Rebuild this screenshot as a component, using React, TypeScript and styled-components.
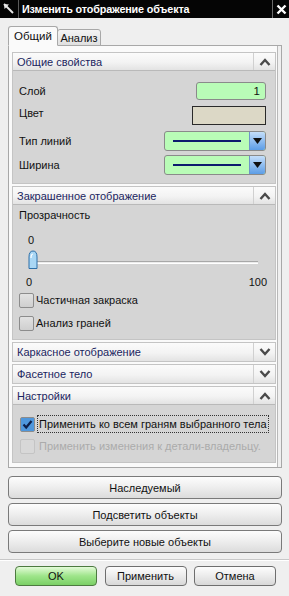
import React, { useState } from 'react'
import styled, { createGlobalStyle } from 'styled-components'

const GlobalStyle = createGlobalStyle`
  html, body {
    margin: 0;
    padding: 0;
    background: #efefef;
  }
  body {
    font-family: "Liberation Sans", Arial, sans-serif;
    font-size: 11px;
    color: #111;
  }
`

const Window = styled.div`
  width: 289px;
  height: 596px;
  background: #efefef;
  display: flex;
  flex-direction: column;
  overflow: hidden;
`

const TitleBar = styled.div`
  height: 18px;
  background: #050505;
  display: flex;
  align-items: stretch;
  color: #fff;
`

const TitleIcon = styled.div`
  width: 18px;
  display: flex;
  align-items: center;
  justify-content: center;
  border-right: 1px solid #5a5a5a;
`

const TitleText = styled.div`
  flex: 1;
  padding-left: 3px;
  font-weight: bold;
  font-size: 10.8px;
  line-height: 18px;
  letter-spacing: -0.15px;
`

const CloseBox = styled.div`
  width: 16px;
  border-left: 1px solid #6a6a6a;
  display: flex;
  align-items: center;
  justify-content: center;
`

const Body = styled.div`
  padding: 8px 7px 0 8px;
  display: flex;
  flex-direction: column;
`

const TabRow = styled.div`
  display: flex;
  align-items: flex-end;
  height: 20px;
  position: relative;
  z-index: 1;
`

const Tab = styled.div<{ $active?: boolean }>`
  height: ${p => (p.$active ? 20 : 17)}px;
  width: ${p => (p.$active ? 50 : 44)}px;
  box-sizing: border-box;
  border: 1px solid #a8a8a8;
  border-bottom: ${p => (p.$active ? '1px solid #fafafa' : '1px solid #a8a8a8')};
  border-radius: 3px 3px 0 0;
  background: ${p => (p.$active ? '#fafafa' : 'linear-gradient(#f4f4f4, #e0e0e0)')};
  display: flex;
  align-items: center;
  justify-content: center;
  font-size: ${p => (p.$active ? 11.5 : 11)}px;
  margin-right: ${p => (p.$active ? '-1px' : 0)};
  position: relative;
  z-index: ${p => (p.$active ? 2 : 1)};
`

const Panel = styled.div`
  margin-top: -1px;
  height: 423px;
  box-sizing: border-box;
  border: 1px solid #a8a8a8;
  box-shadow: inset -3px 0 0 #efefef, inset -4px 0 0 #b8b8b8;
  background: #fafafa;
  padding: 6px 5px 0 3px;
  display: flex;
  flex-direction: column;
  gap: 2px;
`

const Section = styled.div`
  border: 1px solid #c4c4c4;
  background: #d5d5d5;
`

const SectionHeader = styled.div<{ $open: boolean }>`
  height: 18px;
  box-sizing: border-box;
  display: flex;
  align-items: stretch;
  background: linear-gradient(#fbfbfb, #f3f3f3 55%, #e3e3e3);
  border-bottom: ${p => (p.$open ? '1px solid #b9b9b9' : 'none')};
`

const SectionTitle = styled.div`
  flex: 1;
  padding-left: 4px;
  line-height: 18px;
  color: #1b2560;
`

const Toggle = styled.div`
  width: 21px;
  border-left: 1px solid #d0d0d0;
  display: flex;
  align-items: center;
  justify-content: center;
`

const SectionBody = styled.div<{ $pad: string }>`
  padding: ${p => p.$pad};
  display: flex;
  flex-direction: column;
`

const FieldRow = styled.div<{ $h: number }>`
  height: ${p => p.$h}px;
  display: flex;
  align-items: center;
  justify-content: space-between;
`

const NumberBox = styled.div`
  width: 70px;
  height: 18px;
  box-sizing: border-box;
  border: 1px solid #8a8a8a;
  border-radius: 3px;
  background: #b9fcb7;
  text-align: right;
  padding-right: 5px;
  line-height: 16px;
  font-size: 11.5px;
`

const ColorBox = styled.div`
  width: 74px;
  height: 19px;
  box-sizing: border-box;
  border: 1px solid #2a2a2a;
  background: #dcd8c6;
`

const Combo = styled.div`
  width: 102px;
  height: 20px;
  box-sizing: border-box;
  border: 1px solid #8a8a8a;
  border-radius: 3px;
  background: #b9fcb7;
  display: flex;
  align-items: center;
  padding-left: 8px;
  overflow: hidden;
`

const ComboLine = styled.div`
  flex: 1;
  height: 2px;
  background: #0c1a6e;
  margin-right: 8px;
`

const ComboButton = styled.div`
  width: 15px;
  align-self: stretch;
  background: linear-gradient(#c4defa, #5c9de6);
  border-left: 1px solid #6f94c8;
  display: flex;
  align-items: center;
  justify-content: center;
`

const Label = styled.div<{ $lift?: number }>`
  line-height: 14px;
  margin-top: ${p => -(p.$lift || 0)}px;
`

const SliderArea = styled.div`
  padding: 0 0 0 8px;
  display: flex;
  flex-direction: column;
`

const SliderTrack = styled.div`
  height: 20px;
  margin-top: 2px;
  position: relative;
  display: flex;
  align-items: flex-start;
  padding-top: 12px;
  box-sizing: border-box;
`

const TrackLine = styled.div`
  flex: 1;
  height: 3px;
  margin: 0 9px 0 2px;
  box-sizing: border-box;
  border-top: 1px solid #a8a8a8;
  border-bottom: 1px solid #ffffff;
  background: #ececec;
`

const Thumb = styled.div`
  position: absolute;
  left: 1px;
  top: 1px;
`

const Scale = styled.div<{ $top: number; $shift?: number }>`
  display: flex;
  justify-content: space-between;
  margin-top: ${p => p.$top}px;
  margin-left: ${p => p.$shift || 0}px;
  line-height: 14px;
`

const CheckRow = styled.div<{ $disabled?: boolean; $top?: number }>`
  height: 22px;
  margin-top: ${p => p.$top || 0}px;
  display: flex;
  align-items: center;
  gap: 2px;
  color: ${p => (p.$disabled ? '#ababab' : '#111')};
`

const Box = styled.div<{ $disabled?: boolean }>`
  width: 13px;
  height: 13px;
  border: 1px solid ${p => (p.$disabled ? '#c4c4c4' : '#8c8c8c')};
  border-radius: 2px;
  background: ${p => (p.$disabled ? '#d8d8d8' : 'linear-gradient(#e2e2e2, #cfcfcf)')};
  display: flex;
  align-items: center;
  justify-content: center;
  flex-shrink: 0;
`

const FocusText = styled.span<{ $focus?: boolean }>`
  border: 1px dotted ${p => (p.$focus ? '#333' : 'transparent')};
  padding: 1px 1px;
  line-height: 14px;
  white-space: nowrap;
`

const Buttons = styled.div`
  display: flex;
  flex-direction: column;
  gap: 4px;
  margin-top: 8px;
`

const WideButton = styled.div`
  height: 23px;
  box-sizing: border-box;
  border: 1px solid #7a7a7a;
  border-radius: 4px;
  background: linear-gradient(#fdfdfd, #efefef 45%, #dcdcdc);
  display: flex;
  align-items: center;
  justify-content: center;
`

const Divider = styled.div`
  height: 1px;
  background: #c8c8c8;
  border-bottom: 1px solid #ffffff;
  margin: 6px -7px 0 -8px;
`

const Footer = styled.div`
  display: flex;
  justify-content: space-between;
  padding: 5px 6px 0 7px;
`

const FooterButton = styled.div<{ $primary?: boolean }>`
  width: 82px;
  height: 20px;
  box-sizing: border-box;
  border: 1px solid ${p => (p.$primary ? '#4d7a40' : '#6e6e6e')};
  border-radius: 4px;
  background: ${p =>
    p.$primary
      ? 'linear-gradient(#e4fbd8, #9ee58a 50%, #7bd066)'
      : 'linear-gradient(#fdfdfd, #ededed 45%, #d8d8d8)'};
  display: flex;
  align-items: center;
  justify-content: center;
`

const Chevron = ({ up }: { up: boolean }) => (
  <svg width="12" height="8" viewBox="0 0 12 8">
    <path
      d={up ? 'M1.5 7 L6 2 L10.5 7' : 'M1.5 1 L6 6 L10.5 1'}
      fill="none"
      stroke="#4a4a4a"
      strokeWidth="2.4"
    />
  </svg>
)

const DownArrow = () => (
  <svg width="9" height="6" viewBox="0 0 9 6">
    <path d="M0 0 H9 L4.5 6 Z" fill="#111" />
  </svg>
)

const Check = ({ on, disabled }: { on?: boolean; disabled?: boolean }) => (
  <Box $disabled={disabled}>
    {on && (
      <svg width="13" height="13" viewBox="0 0 13 13">
        <rect x="0" y="0" width="13" height="13" fill="#4f97dc" />
        <path d="M2.5 6.5 L5.2 9.5 L10.5 3" fill="none" stroke="#0d1f4a" strokeWidth="2.2" />
      </svg>
    )}
  </Box>
)

const Header = ({ title, open }: { title: string; open: boolean }) => (
  <SectionHeader $open={open}>
    <SectionTitle>{title}</SectionTitle>
    <Toggle>
      <Chevron up={open} />
    </Toggle>
  </SectionHeader>
)

const LineCombo = () => (
  <Combo>
    <ComboLine />
    <ComboButton>
      <DownArrow />
    </ComboButton>
  </Combo>
)

const App: React.FC = () => {
  const [tab] = useState(0)

  return (
    <>
      <GlobalStyle />
      <Window>
        <TitleBar>
          <TitleIcon>
            <svg width="12" height="12" viewBox="0 0 12 12">
              <path d="M1 1 L10 10" stroke="#e8e8e8" strokeWidth="2" />
              <path d="M1 1 L6 1.5 L1.5 6 Z" fill="#e8e8e8" />
            </svg>
          </TitleIcon>
          <TitleText>Изменить отображение объекта</TitleText>
          <CloseBox>
            <svg width="11" height="11" viewBox="0 0 11 11">
              <path d="M1.5 1.5 L9.5 9.5 M9.5 1.5 L1.5 9.5" stroke="#fff" strokeWidth="2.4" />
            </svg>
          </CloseBox>
        </TitleBar>

        <Body>
          <TabRow>
            <Tab $active={tab === 0}>Общий</Tab>
            <Tab $active={tab === 1}>Анализ</Tab>
          </TabRow>
          <Panel>
            <Section>
              <Header title="Общие свойства" open />
              <SectionBody $pad="10px 9px 6px 6px">
                <FieldRow $h={20}>
                  <Label>Слой</Label>
                  <NumberBox>1</NumberBox>
                </FieldRow>
                <FieldRow $h={28}>
                  <Label $lift={4}>Цвет</Label>
                  <ColorBox />
                </FieldRow>
                <FieldRow $h={24}>
                  <Label>Тип линий</Label>
                  <LineCombo />
                </FieldRow>
                <FieldRow $h={24}>
                  <Label>Ширина</Label>
                  <LineCombo />
                </FieldRow>
              </SectionBody>
            </Section>

            <Section>
              <Header title="Закрашенное отображение" open />
              <SectionBody $pad="3px 8px 5px 6px">
                <Label>Прозрачность</Label>
                <SliderArea>
                  <Scale $top={11} $shift={1}>
                    <span>0</span>
                  </Scale>
                  <SliderTrack>
                    <TrackLine />
                    <Thumb>
                      <svg width="10" height="20" viewBox="0 0 10 20">
                        <path
                          d="M1 18.5 V7 Q1 1 5 1 Q9 1 9 7 V18.5 Z"
                          fill="#a9d7f5"
                          stroke="#2d6fa8"
                          strokeWidth="1"
                        />
                        <path d="M3 8 Q3 4 5 4" stroke="#ffffff" fill="none" strokeWidth="1.2" />
                      </svg>
                    </Thumb>
                  </SliderTrack>
                  <Scale $top={6} $shift={-1}>
                    <span>0</span>
                    <span>100</span>
                  </Scale>
                </SliderArea>
                <CheckRow>
                  <Check />
                  <span>Частичная закраска</span>
                </CheckRow>
                <CheckRow $top={1}>
                  <Check />
                  <span>Анализ граней</span>
                </CheckRow>
              </SectionBody>
            </Section>

            <Section>
              <Header title="Каркасное отображение" open={false} />
            </Section>
            <Section>
              <Header title="Фасетное тело" open={false} />
            </Section>

            <Section>
              <Header title="Настройки" open />
              <SectionBody $pad="8px 4px 5px 7px">
                <CheckRow>
                  <Check on />
                  <FocusText $focus>Применить ко всем граням выбранного тела</FocusText>
                </CheckRow>
                <CheckRow $disabled>
                  <Check disabled />
                  <FocusText>Применить изменения к детали-владельцу.</FocusText>
                </CheckRow>
              </SectionBody>
            </Section>
          </Panel>

          <Buttons>
            <WideButton>Наследуемый</WideButton>
            <WideButton>Подсветить объекты</WideButton>
            <WideButton>Выберите новые объекты</WideButton>
          </Buttons>
          <Divider />
          <Footer>
            <FooterButton $primary>OK</FooterButton>
            <FooterButton>Применить</FooterButton>
            <FooterButton>Отмена</FooterButton>
          </Footer>
        </Body>
      </Window>
    </>
  )
}

export default App
